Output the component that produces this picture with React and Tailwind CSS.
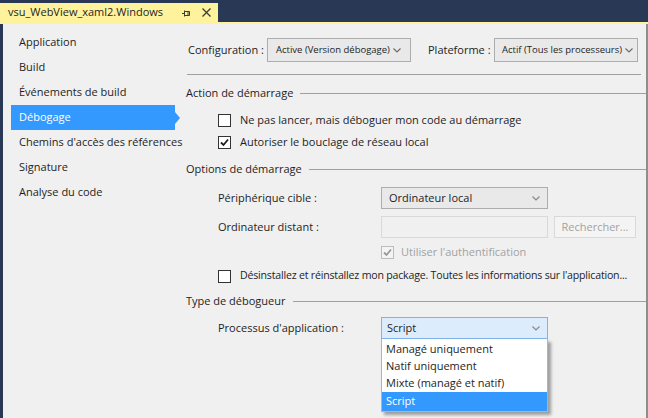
import React from 'react';

const navItems = [
  'Application',
  'Build',
  'Événements de build',
  'Débogage',
  'Chemins d\'accès des références',
  'Signature',
  'Analyse du code',
];

const Chevron = ({ color = '#6d6d6d' }) => (
  <svg width="8" height="5" viewBox="0 0 8 5" className="shrink-0">
    <path d="M0.5 0.5 L4 4 L7.5 0.5" fill="none" stroke={color} strokeWidth="1.2" />
  </svg>
);

const Checkbox = ({ checked, disabled }) => (
  <span
    className={`w-[13px] h-[13px] shrink-0 border flex items-center justify-center ${
      disabled ? 'border-[#bcbcbc] bg-[#f4f4f4]' : 'border-[#333333] bg-white'
    }`}
  >
    {checked && (
      <svg width="9" height="9" viewBox="0 0 9 9">
        <path
          d="M1 4.5 L3.5 7 L8 1.5"
          fill="none"
          stroke={disabled ? '#9a9a9a' : '#1e1e1e'}
          strokeWidth="1.8"
        />
      </svg>
    )}
  </span>
);

const SectionHeader = ({ label, className = '' }) => (
  <div className={`h-[18px] flex items-center pl-[11px] ${className}`}>
    <span>{label}</span>
    <div className="flex-1 h-px bg-[#a0a0a0] ml-[7px]" />
  </div>
);

const CheckRow = ({ label, checked, className = '', textClass = '' }) => (
  <div className={`flex items-center pl-[43px] ${className}`}>
    <Checkbox checked={checked} />
    <span className={`ml-[9px] whitespace-nowrap ${textClass}`}>{label}</span>
  </div>
);

export default function App() {
  return (
    <div
      className="w-[648px] h-[418px] overflow-hidden flex flex-col bg-[#f0f0f0] text-[#1e1e1e] text-[11px]"
      style={{ fontFamily: '"Open Sans", "Noto Sans", sans-serif' }}
    >
      {/* tab strip */}
      <div className="h-[22px] bg-[#293955] flex items-end shrink-0">
        <div className="w-[218px] h-[19px] bg-[#fff29d] flex items-center pl-[8px] text-[11px] text-[#1e1e1e]">
          <span className="w-[174px] whitespace-nowrap">vsu_WebView_xaml2.Windows</span>
          <svg width="10" height="9" viewBox="0 0 10 9" className="mt-px">
            <path d="M0 4.5h2.5 M2.5 1.5v6 M2.5 2.5h5v4h-5 M6 2.5v4" fill="none" stroke="#3c3c3c" strokeWidth="1" />
          </svg>
          <svg width="9" height="9" viewBox="0 0 9 9" className="ml-[10px]">
            <path d="M0.5 0.5 L8.5 8.5 M8.5 0.5 L0.5 8.5" fill="none" stroke="#3c3c3c" strokeWidth="1.3" />
          </svg>
        </div>
      </div>
      <div className="h-[2px] bg-[#fff29d] shrink-0" />

      {/* body */}
      <div className="flex-1 flex border-l-[3px] border-l-[#293955] border-r-[2px] border-r-[#8e8e8e]">
        {/* left nav */}
        <div className="w-[172px] shrink-0 pt-[6px]">
          {navItems.map((item) => {
            const active = item === 'Débogage';
            return (
              <div
                key={item}
                className={`relative h-[25px] ml-[8px] w-[164px] flex items-center pl-[8px] whitespace-nowrap ${
                  active ? 'bg-[#3399ff] text-white' : ''
                }`}
              >
                {item}
                {active && (
                  <span className="absolute right-[-5px] top-[6.5px] w-0 h-0 border-y-[6px] border-y-transparent border-l-[5px] border-l-[#3399ff]" />
                )}
              </div>
            );
          })}
        </div>

        {/* settings */}
        <div className="flex-1 min-w-0 flex flex-col">
          {/* configuration row */}
          <div className="flex items-center h-[24px] mt-[14px] pl-[13px]">
            <span className="w-[79px] whitespace-nowrap">Configuration :</span>
            <div className="w-[144px] h-[24px] border border-[#adadad] bg-[#e9e9e9] flex items-center pl-[8px] gap-[3px] whitespace-nowrap text-[9.5px]">
              <span>Active (Version débogage)</span>
              <Chevron />
            </div>
            <span className="w-[66px] ml-[17px] whitespace-nowrap">Plateforme :</span>
            <div className="w-[144px] h-[24px] border border-[#adadad] bg-[#e9e9e9] flex items-center pl-[7px] gap-[3px] whitespace-nowrap text-[9.5px]">
              <span>Actif (Tous les processeurs)</span>
              <Chevron />
            </div>
          </div>
          <div className="h-px bg-[#a0a0a0] mt-[12px] ml-[12px] mr-[5px]" />

          <SectionHeader label="Action de démarrage" className="mt-[9px]" />
          <CheckRow label="Ne pas lancer, mais déboguer mon code au démarrage" className="h-[22px] mt-[7px]" />
          <CheckRow label="Autoriser le bouclage de réseau local" checked className="h-[22px]" />

          <SectionHeader label="Options de démarrage" className="mt-[7px]" />
          <div className="flex items-center h-[22px] mt-[9px] pl-[43px]">
            <span className="w-[163px]">Périphérique cible :</span>
            <div className="w-[167px] h-[22px] border border-[#adadad] bg-[#e9e9e9] flex items-center justify-between pl-[7px] pr-[7px]">
              <span>Ordinateur local</span>
              <Chevron color="#8a8a8a" />
            </div>
          </div>
          <div className="flex items-center h-[22px] mt-[7px] pl-[43px]">
            <span className="w-[163px]">Ordinateur distant :</span>
            <div className="w-[167px] h-[22px] border border-[#d9d9d9] bg-[#f0f0f0]" />
            <div className="w-[82px] h-[22px] ml-[6px] border border-[#d9d9d9] bg-[#f4f4f4] flex items-center justify-center text-[#a2a2a2]">
              Rechercher...
            </div>
          </div>
          <div className="flex items-center h-[18px] mt-[5px] pl-[206px]">
            <Checkbox checked disabled />
            <span className="ml-[7px] text-[#a2a2a2] whitespace-nowrap">Utiliser l'authentification</span>
          </div>
          <CheckRow
            label="Désinstallez et réinstallez mon package. Toutes les informations sur l'application..."
            className="h-[18px] mt-[6px]"
            textClass="text-[10.6px] tracking-[-0.2px]"
          />

          <SectionHeader label="Type de débogueur" className="mt-[7px]" />
          <div className="flex items-center h-[22px] mt-[7px] pl-[43px]">
            <span className="w-[163px]">Processus d'application :</span>
            <div className="relative w-[167px] h-[22px]">
              <div className="h-full border border-[#7eb4ea] bg-[#dcecfc] flex items-center justify-between pl-[5px] pr-[7px]">
                <span>Script</span>
                <Chevron color="#8a8a8a" />
              </div>
              <div className="absolute left-0 top-full w-[167px] border border-[#8fbde9] border-t-0 bg-white pt-[2px] shadow-[3px_3px_3px_rgba(0,0,0,0.35)]">
                <div className="h-[17px] flex items-center pl-[4px]">Managé uniquement</div>
                <div className="h-[17px] flex items-center pl-[4px]">Natif uniquement</div>
                <div className="h-[17px] flex items-center pl-[4px]">Mixte (managé et natif)</div>
                <div className="h-[19px] flex items-center pl-[4px] bg-[#3399ff] text-white">Script</div>
              </div>
            </div>
          </div>
        </div>
      </div>
    </div>
  );
}
